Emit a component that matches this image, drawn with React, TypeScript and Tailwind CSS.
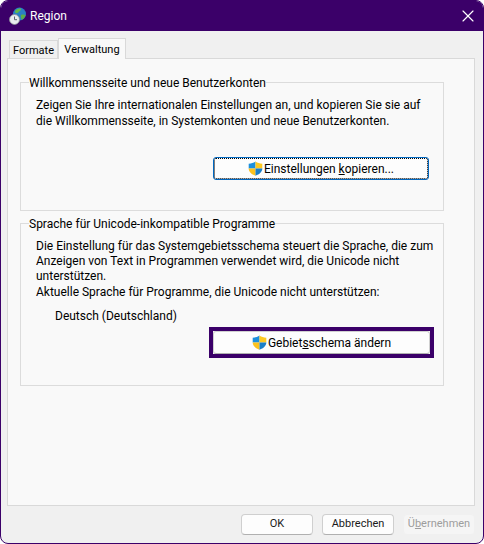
import { X } from "lucide-react";

function Shield() {
  return (
    <svg width="15" height="15" viewBox="0 0 15 15" className="shrink-0">
      <defs>
        <clipPath id="shield-outline">
          <path d="M7.5 0.5C9.5 2 11.7 2.6 14.3 2.7V7.5C14.3 10.8 11.6 13.2 7.5 14.7C3.4 13.2 0.7 10.8 0.7 7.5V2.7C3.3 2.6 5.5 2 7.5 0.5Z" />
        </clipPath>
      </defs>
      <g clipPath="url(#shield-outline)">
        <rect x="0" y="0" width="7.5" height="7.5" fill="#1c8fdc" />
        <rect x="7.5" y="0" width="7.5" height="7.5" fill="#fdc922" />
        <rect x="0" y="7.5" width="7.5" height="7.5" fill="#fcc21e" />
        <rect x="7.5" y="7.5" width="7.5" height="7.5" fill="#1b7fc9" />
      </g>
    </svg>
  );
}

function GlobeIcon() {
  return (
    <svg width="18" height="18" viewBox="0 0 18 18" className="shrink-0">
      <circle cx="10.5" cy="7" r="6.5" fill="#2a7fc4" />
      <path d="M6 4C7.5 1.8 10 1 12 1.6C12.6 3 11 4 10 4.6C9.4 6 7.6 6.4 6.4 6Z" fill="#63b84a" />
      <path d="M12 8C13.4 7.2 15.6 7.4 16.6 8.2C16 10.4 14.4 12 12.8 12.8C12.2 11 11.4 9.6 12 8Z" fill="#5cae48" />
      <circle cx="5.5" cy="12.5" r="5" fill="#e9ecef" stroke="#8b9096" strokeWidth="0.8" />
      <path d="M5.5 9.5V12.7H8" fill="none" stroke="#5d6368" strokeWidth="1" />
    </svg>
  );
}

function Group({ title, height, children }: { title: string; height: string; children: React.ReactNode }) {
  return (
    <fieldset className={`border border-[#dcdcdc] w-[424px] ${height} pl-[15px] pr-[14px]`}>
      <legend className="-ml-[7px] text-[#000000] h-[16px] leading-[18px]">{title}</legend>
      {children}
    </fieldset>
  );
}

function FooterButton({ children, disabled }: { children: React.ReactNode; disabled?: boolean }) {
  return (
    <button
      className={`w-[72px] h-[21px] rounded-[4px] border flex items-center justify-center text-[11px] ${
        disabled ? "border-[#f0f0f0] bg-[#f5f5f5] text-[#9d9d9d]" : "border-[#cfcfcf] border-b-[#b0b0b0] bg-[#fdfdfd] text-[#1a1a1a]"
      }`}
    >
      {children}
    </button>
  );
}

export default function App() {
  return (
    <div className="w-[484px] h-[544px] bg-[#ffffff] font-['Roboto','Open_Sans',sans-serif] text-[12px] text-[#000000]">
      <div className="w-full h-full flex flex-col rounded-t-[8px] rounded-b-[8px] border-[1px] border-[#3b0069] bg-[#f0f0f0] overflow-hidden">
        {/* Title bar */}
        <div className="h-[30px] shrink-0 bg-[#3b0069] flex items-center justify-between pl-[8px] pr-[5px] text-[#ffffff]">
          <div className="flex items-center gap-[3px]">
            <GlobeIcon />
            <span className="text-[12px] leading-none">Region</span>
          </div>
          <X size={20} strokeWidth={1.4} color="#ffffff" />
        </div>

        {/* Tabs */}
        <div className="flex items-end h-[27px] shrink-0 pl-[8px] text-[11px]">
          <div className="w-[49px] h-[18px] bg-[#f0f0f0] border border-b-0 border-[#d9d9d9] flex items-center justify-center leading-none pt-[2px]">
            Formate
          </div>
          <div className="w-[68px] h-[21px] bg-[#f9f9f9] border border-b-0 border-[#d9d9d9] flex items-center justify-center leading-none -mb-px z-10">
            Verwaltung
          </div>
        </div>

        {/* Panel */}
        <div className="ml-[6px] mr-[8px] h-[448px] shrink-0 bg-[#f9f9f9] border border-[#d9d9d9] flex flex-col gap-[4px] pl-[12px] pt-[15px]">
          <Group title="Willkommensseite und neue Benutzerkonten" height="h-[137px]">
            <p className="leading-[16px] mt-[7px]">
              Zeigen Sie Ihre internationalen Einstellungen an, und kopieren Sie sie auf die Willkommensseite, in Systemkonten und neue Benutzerkonten.
            </p>
            <div className="mt-[28px] flex justify-end">
              <button className="w-[216px] h-[23px] bg-[#fdfdfd] rounded-[3px] border border-[#0067c0] outline-1 outline-dotted outline-[#000000] -outline-offset-2 flex items-center justify-center gap-[1px]">
                <Shield />
                <span>
                  Einstellungen <span className="underline">k</span>opieren...
                </span>
              </button>
            </div>
          </Group>

          <Group title="Sprache für Unicode-inkompatible Programme" height="h-[171px]">
            <p className="leading-[15px] mt-[8px] -mr-[10px]">
              Die Einstellung für das Systemgebietsschema steuert die Sprache, die zum Anzeigen von Text in Programmen verwendet wird, die Unicode nicht unterstützen.
            </p>
            <p className="leading-[15px] mt-[1px]">Aktuelle Sprache für Programme, die Unicode nicht unterstützen:</p>
            <p className="leading-[15px] mt-[9px] ml-[19px]">Deutsch (Deutschland)</p>
            <div className="mt-[3px] flex justify-end -mr-[5px]">
              <div className="border-[4px] border-[#3b0069] w-[225px] h-[31px]">
                <button className="w-full h-full bg-[#fdfdfd] rounded-[3px] border border-[#d0d0d0] border-b-[#b0b0b0] flex items-center justify-center gap-[1px]">
                  <Shield />
                  <span>
                    Gebiet<span className="underline">s</span>schema ändern
                  </span>
                </button>
              </div>
            </div>
          </Group>
        </div>

        {/* Footer */}
        <div className="flex justify-end gap-[9px] pr-[8px] pt-[8px]">
          <FooterButton>OK</FooterButton>
          <FooterButton>Abbrechen</FooterButton>
          <FooterButton disabled>
            <span>
              Ü<span className="underline">b</span>ernehmen
            </span>
          </FooterButton>
        </div>
      </div>
    </div>
  );
}
